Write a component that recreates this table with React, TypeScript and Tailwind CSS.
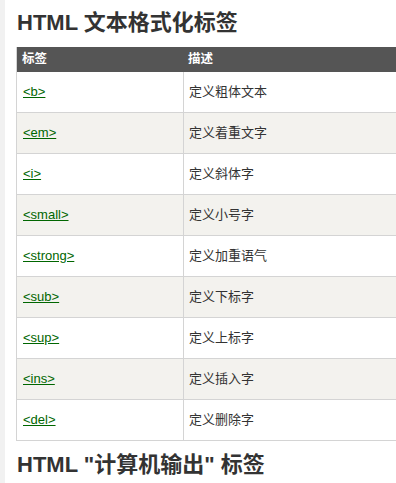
import React from 'react';

const rows = [
  { tag: '<b>', desc: '定义粗体文本' },
  { tag: '<em>', desc: '定义着重文字' },
  { tag: '<i>', desc: '定义斜体字' },
  { tag: '<small>', desc: '定义小号字' },
  { tag: '<strong>', desc: '定义加重语气' },
  { tag: '<sub>', desc: '定义下标字' },
  { tag: '<sup>', desc: '定义上标字' },
  { tag: '<ins>', desc: '定义插入字' },
  { tag: '<del>', desc: '定义删除字' },
];

const font = "font-['Liberation_Sans','Noto_Sans_CJK_SC',sans-serif]";

const App = () => {
  return (
    <div className={`flex w-[396px] h-[483px] overflow-hidden bg-white ${font}`}>
      {/* sidebar edge */}
      <div className="w-[5px] shrink-0 bg-[#f1f1f1]" />
      <div className="flex-1 pl-[11px] min-w-0">
        <h2 className="mt-[8px] mb-[9px] text-[22px] leading-[30px] font-bold text-[#333] pl-[1px]">
          HTML 文本格式化标签
        </h2>

        <div className="w-[500px] border-l border-[#d4d4d4] text-[13px]">
          <div className="grid grid-cols-[167px_1fr] h-[25px] bg-[#555] text-white text-[12.5px] font-bold items-center">
            <div className="pl-[5px]">标签</div>
            <div className="pl-[4px]">描述</div>
          </div>
          {rows.map((r, i) => (
            <div
              key={r.tag}
              className={`grid grid-cols-[167px_1fr] h-[41px] border-b border-[#d4d4d4] ${
                i % 2 === 1 ? 'bg-[#f3f2ee]' : 'bg-white'
              }`}
            >
              <div className="flex items-center pl-[6px] border-r border-[#d4d4d4]">
                <a href="#" className="text-[#006600] underline">
                  {r.tag}
                </a>
              </div>
              <div className="flex items-center pl-[5px] text-[#333]">{r.desc}</div>
            </div>
          ))}
        </div>

        <h2 className="mt-[9px] text-[22px] leading-[30px] font-bold text-[#333] pl-[1px]">
          HTML "计算机输出" 标签
        </h2>
      </div>
    </div>
  );
};

export default App;
